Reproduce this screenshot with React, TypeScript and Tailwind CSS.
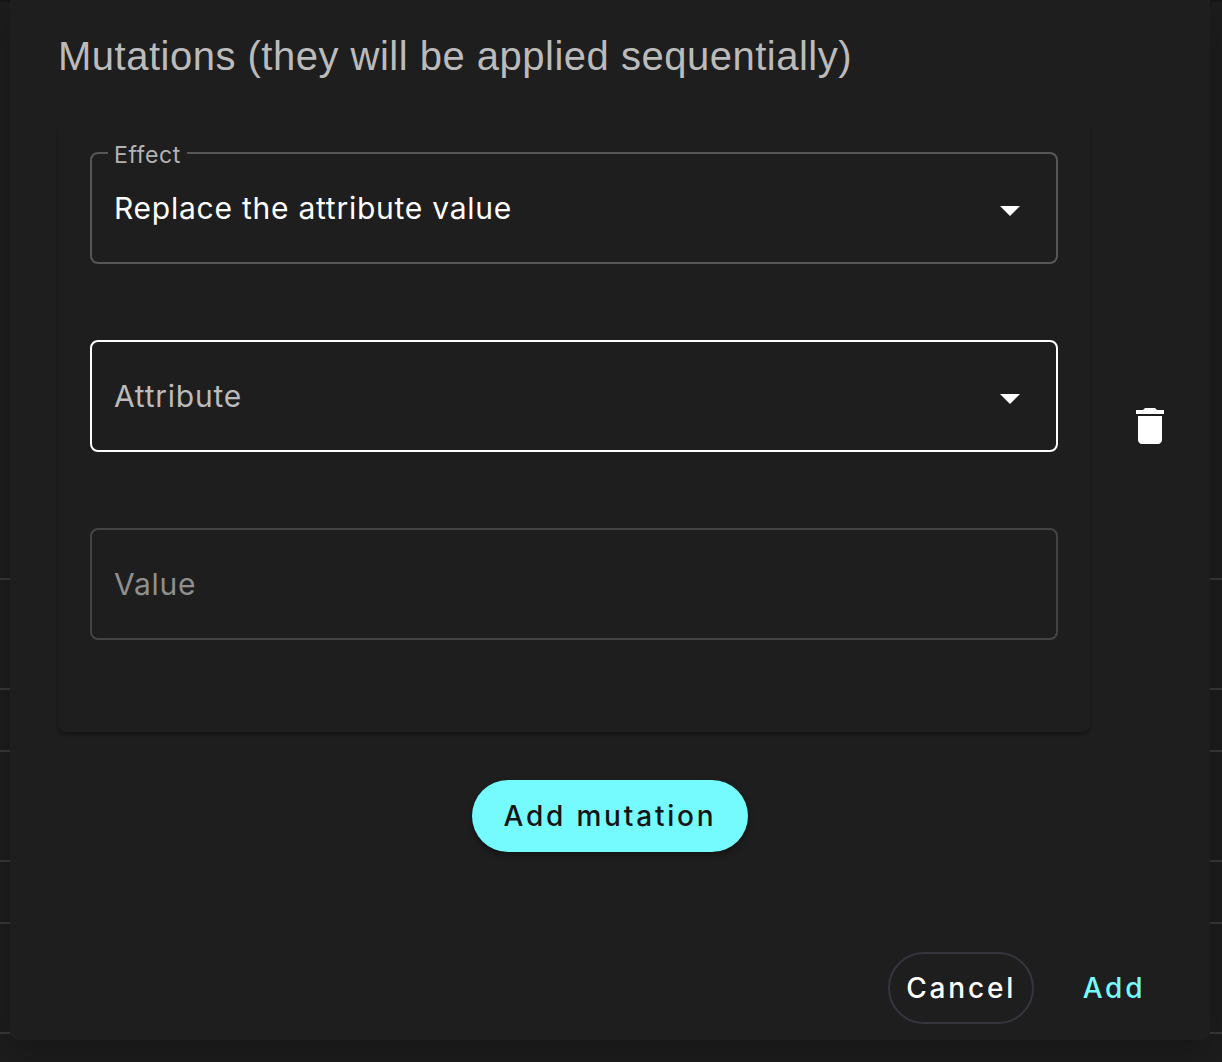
import React, { useState } from 'react';

const ArrowDownIcon = () => (
  <svg
    viewBox="0 0 20 20"
    className="pointer-events-none absolute right-[38px] top-1/2 size-5 -translate-y-1/2 fill-white"
    aria-hidden="true"
  >
    <path d="M0 8h20L10 18z" />
  </svg>
);

const TrashIcon = () => (
  <svg viewBox="0 0 24 24" className="size-12 fill-white" aria-hidden="true">
    <path d="M6 19c0 1.1.9 2 2 2h8c1.1 0 2-.9 2-2V7H6v12zM19 4h-3.5l-1-1h-5l-1 1H5v2h14V4z" />
  </svg>
);

// Table rows that stay visible behind the dialog
const TableBackdrop = () => (
  <div className="col-start-1 row-start-1 border-t-2 border-[#151515]" aria-hidden="true">
    <div className="h-[578px] border-b-2 border-[#393939]" />
    <div className="h-[110px] border-b-2 border-[#393939]" />
    <div className="h-[62px] border-b-2 border-[#393939]" />
    <div className="h-[110px] border-b-2 border-[#393939]" />
    <div className="h-[62px] border-b-2 border-[#393939]" />
    <div className="h-[110px] border-b-2 border-[#393939]" />
  </div>
);

const App = () => {
  const [effect, setEffect] = useState('replace');
  const [attribute, setAttribute] = useState('');
  const [value, setValue] = useState('');

  // Handle form submit
  const handleSubmit = (event: React.FormEvent<HTMLFormElement>) => {
    event.preventDefault();
  };

  return (
    <div className="grid min-h-screen grid-cols-1 items-start overflow-hidden bg-[#1d1d1d] font-['Inter',sans-serif]">
      <TableBackdrop />
      <form
        onSubmit={handleSubmit}
        role="dialog"
        aria-labelledby="mutations-title"
        className="relative col-start-1 row-start-1 ml-[10px] mr-3 rounded-b-lg bg-[#1e1e1e] pb-4 shadow-[0_12px_40px_rgba(0,0,0,0.25)]"
      >
        <h2
          id="mutations-title"
          className="px-12 pt-7 font-['Liberation_Sans',sans-serif] text-[40px] leading-[56px] tracking-[0.0125em] text-[#bbbbbb]"
        >
          Mutations (they will be applied sequentially)
        </h2>

        <div className="mt-9 flex items-center pl-12 pr-3">
          <div className="flex flex-1 flex-col gap-[76px] rounded-lg px-8 pb-[92px] pt-8 shadow-[0_3px_3px_rgba(0,0,0,0.3)]">
            <div className="relative">
              <label
                htmlFor="effect"
                className="absolute -top-3 left-[18px] bg-[#1e1e1e] px-[6px] text-[23px] leading-[30px] tracking-wide text-[#b3b3b3]"
              >
                Effect
              </label>
              <select
                id="effect"
                value={effect}
                onChange={(e) => setEffect(e.target.value)}
                className="block h-28 w-full appearance-none rounded-lg border-2 border-[#565656] bg-transparent px-[22px] text-[30px] tracking-wide text-white outline-none"
              >
                <option value="replace">Replace the attribute value</option>
              </select>
              <ArrowDownIcon />
            </div>

            <div className="relative">
              <select
                aria-label="Attribute"
                value={attribute}
                onChange={(e) => setAttribute(e.target.value)}
                className="block h-28 w-full appearance-none rounded-lg border-2 border-white bg-transparent px-[22px] text-[30px] tracking-wide text-[#bbbbbb] outline-none"
              >
                <option value="">Attribute</option>
              </select>
              <ArrowDownIcon />
            </div>

            <input
              type="text"
              aria-label="Value"
              placeholder="Value"
              value={value}
              onChange={(e) => setValue(e.target.value)}
              className="block h-28 w-full rounded-lg border-2 border-[#444444] bg-transparent px-[22px] text-[30px] tracking-wide text-white outline-none placeholder:text-[#8f8f8f]"
            />
          </div>
          <button type="button" aria-label="Delete mutation" className="ml-3 rounded-full p-6">
            <TrashIcon />
          </button>
        </div>

        <div className="mt-12 flex justify-center">
          <button
            type="button"
            className="h-[72px] rounded-full bg-[#75fbfd] px-8 text-[28px] font-medium tracking-widest text-[#151515] shadow-[0_3px_6px_rgba(0,0,0,0.4)]"
          >
            Add mutation
          </button>
        </div>

        <div className="mt-[100px] flex justify-end gap-4 pr-8">
          <button
            type="button"
            className="h-[72px] rounded-full border-2 border-[#34353f] px-4 text-[28px] font-medium tracking-widest text-white"
          >
            Cancel
          </button>
          <button
            type="submit"
            className="h-[72px] min-w-32 rounded-full text-[28px] font-medium tracking-widest text-[#75fbfd]"
          >
            Add
          </button>
        </div>
      </form>
    </div>
  );
};

export default App;
